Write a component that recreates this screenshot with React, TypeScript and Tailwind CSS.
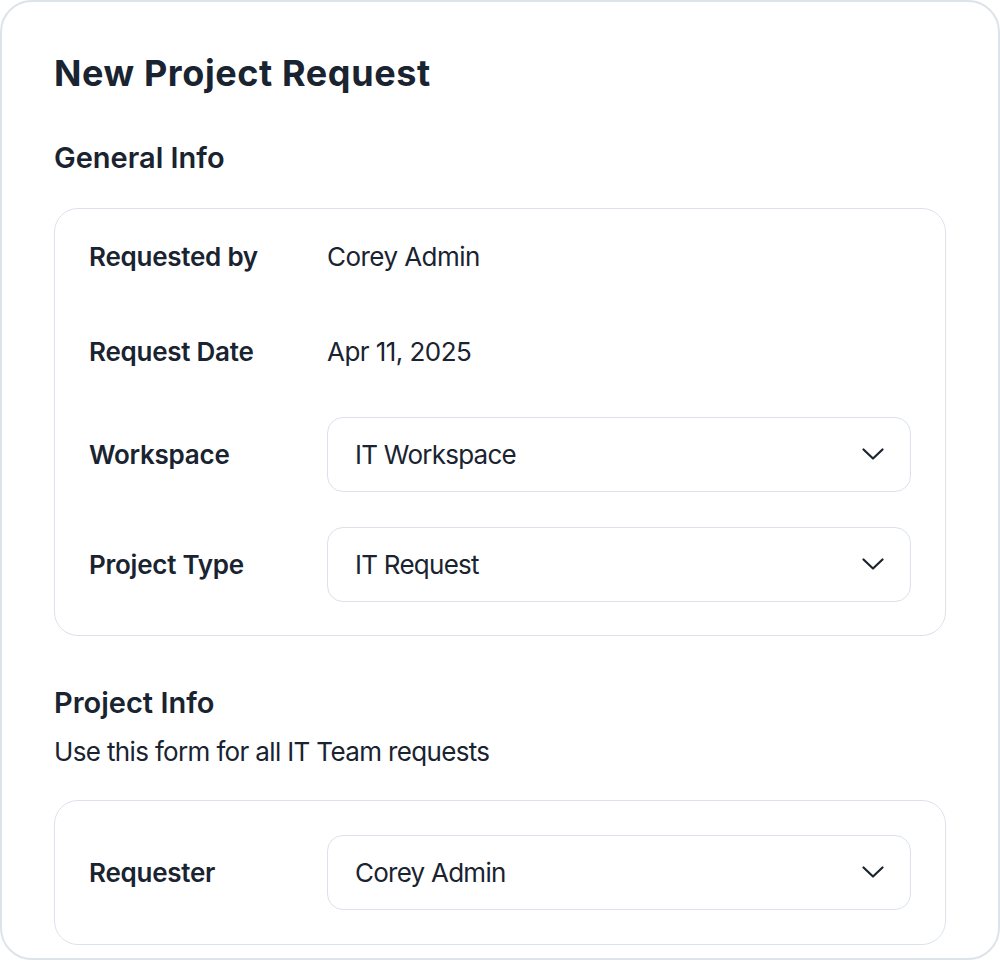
import React from "react";

const Chevron = () => (
  <svg width="22" height="12" viewBox="0 0 22 12" fill="none" className="shrink-0">
    <path d="M1.5 1.5L11 10.5L20.5 1.5" stroke="#1a2330" strokeWidth="2.2" strokeLinecap="round" strokeLinejoin="round" />
  </svg>
);

const Select = ({ value }: { value: string }) => (
  <div className="flex h-[75px] flex-1 items-center justify-between rounded-[16px] border-[1.5px] border-[#dbe2ea] bg-white pl-[27px] pr-[26px]">
    <span className="text-[26px] tracking-[-0.75px] text-[#1a2330]">{value}</span>
    <Chevron />
  </div>
);

const Label = ({ children }: { children: React.ReactNode }) => (
  <div className="w-[238px] shrink-0 text-[26px] font-semibold tracking-[-0.25px] text-[#1a2330]">{children}</div>
);

export default function App() {
  return (
    <div className="bg-white" style={{ fontFamily: "Inter, 'Noto Sans', sans-serif" }}>
      <div className="flex h-[960px] flex-col overflow-hidden rounded-[32px] border-2 border-[#dde3ea] bg-white px-[52px] pt-[51px]">
        <h1 className="text-[36px] font-bold leading-[40px] tracking-[0.6px] text-[#1a2330]">New Project Request</h1>
        <h2 className="mt-[49px] text-[29px] font-semibold leading-[32px] text-[#1a2330]">General Info</h2>
        <div className="mt-[34px] flex flex-col gap-[35px] rounded-[24px] border-[1.5px] border-[#dbe2ea] px-[34px] pb-[33px] pt-[17.5px]">
          <div className="flex h-[60px] items-center">
            <Label>Requested by</Label>
            <span className="text-[26px] tracking-[-0.55px] text-[#1a2330]">Corey Admin</span>
          </div>
          <div className="flex h-[60px] items-center">
            <Label>Request Date</Label>
            <span className="text-[26px] tracking-[-0.55px] text-[#1a2330]">Apr 11, 2025</span>
          </div>
          <div className="flex items-center">
            <Label>Workspace</Label>
            <Select value="IT Workspace" />
          </div>
          <div className="flex items-center">
            <Label>Project Type</Label>
            <Select value="IT Request" />
          </div>
        </div>
        <h2 className="mt-[51px] text-[29px] font-semibold leading-[32px] text-[#1a2330]">Project Info</h2>
        <p className="mt-[17px] text-[26px] leading-[32px] tracking-[-0.65px] text-[#1a2330]">Use this form for all IT Team requests</p>
        <div className="mt-[32px] flex shrink-0 flex-col rounded-[24px] border-[1.5px] border-[#dbe2ea] px-[34px] py-[34px]">
          <div className="flex items-center">
            <Label>Requester</Label>
            <Select value="Corey Admin" />
          </div>
        </div>
      </div>
    </div>
  );
}
